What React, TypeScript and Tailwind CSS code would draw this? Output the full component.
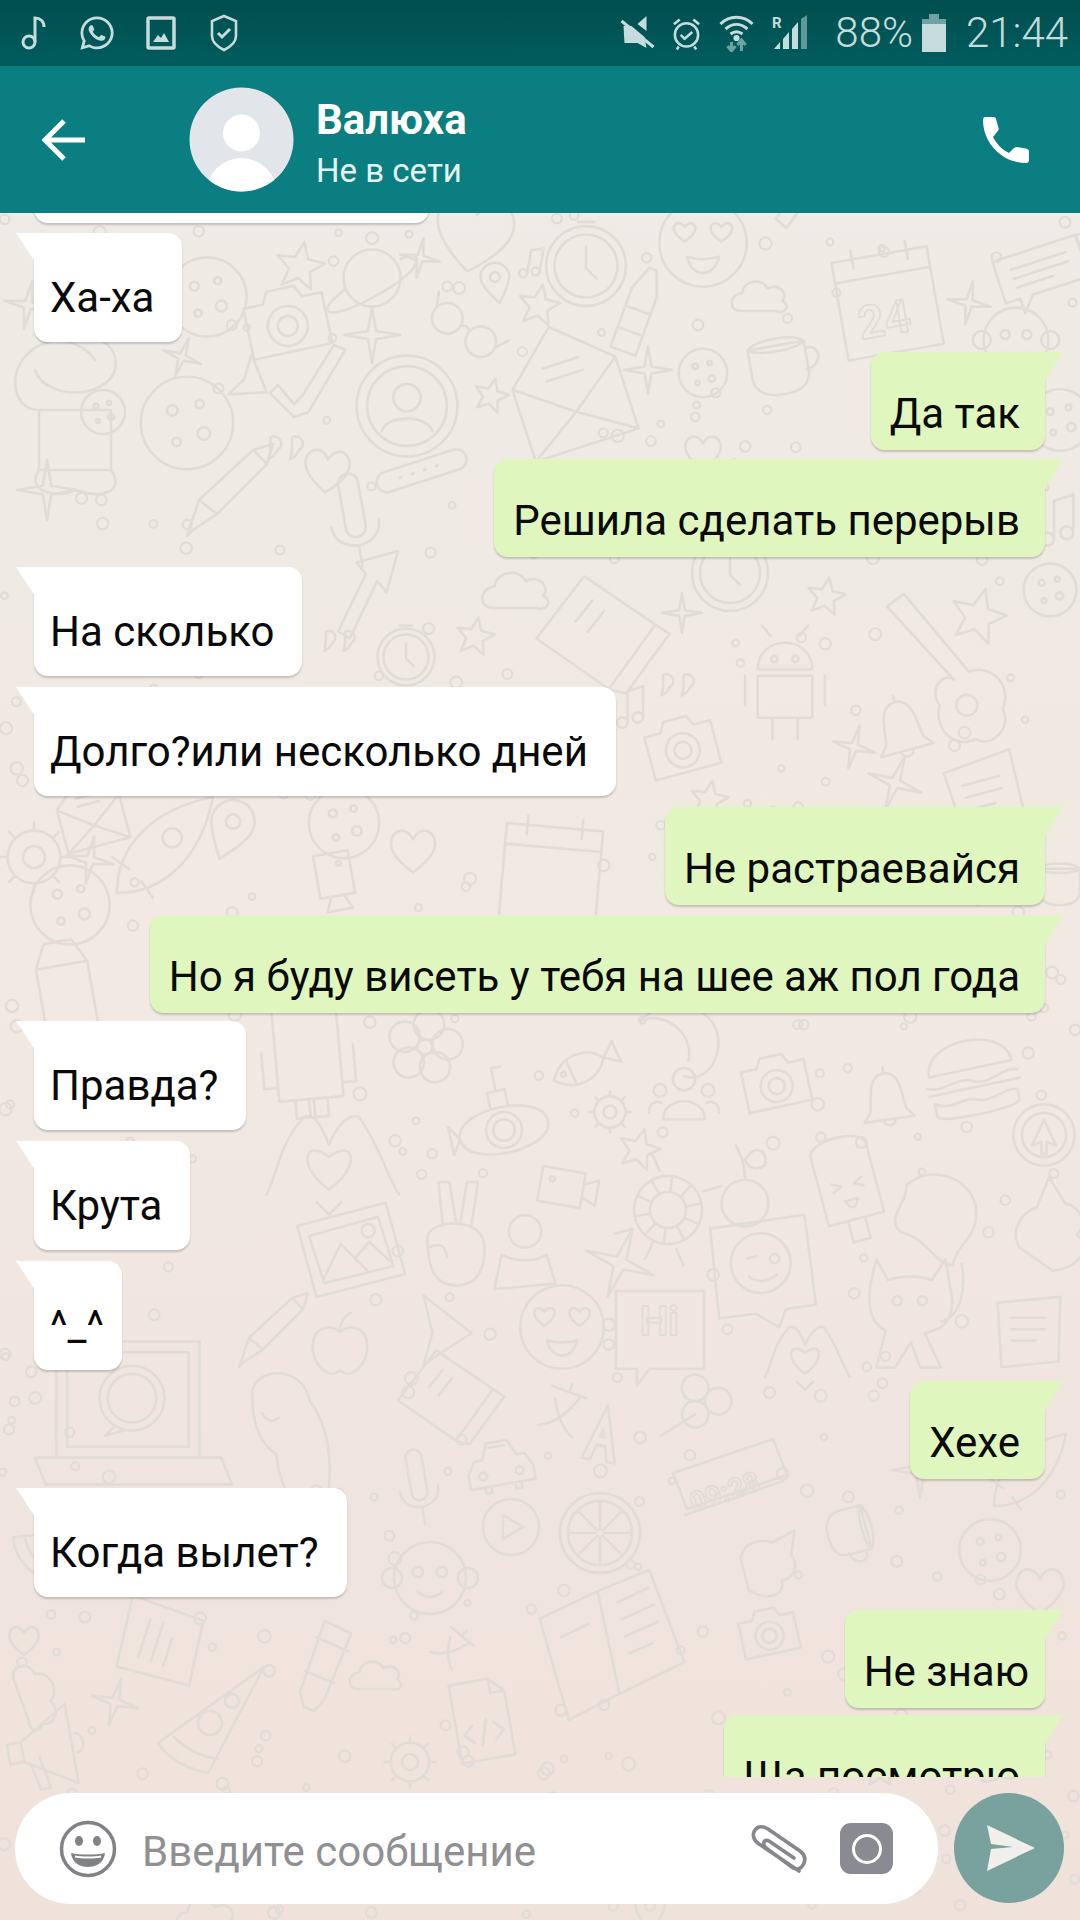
import React from 'react';
import { FaWhatsapp } from 'react-icons/fa';

const c = (x: number, y: number, r: number) =>
  `M${x - r} ${y}a${r} ${r} 0 1 0 ${2 * r} 0a${r} ${r} 0 1 0 ${-2 * r} 0`;

const star = (n: number, R: number, r: number) => {
  let d = '';
  for (let i = 0; i < n * 2; i++) {
    const rad = i % 2 ? r : R;
    const a = (Math.PI * i) / n - Math.PI / 2;
    d += `${i ? 'L' : 'M'}${(rad * Math.cos(a)).toFixed(1)} ${(rad * Math.sin(a)).toFixed(1)}`;
  }
  return d + 'Z';
};

const spokes = (n: number, r1: number, r2: number) => {
  let d = '';
  for (let i = 0; i < n; i++) {
    const a = (2 * Math.PI * i) / n;
    d += `M${(r1 * Math.cos(a)).toFixed(1)} ${(r1 * Math.sin(a)).toFixed(1)}L${(r2 * Math.cos(a)).toFixed(1)} ${(r2 * Math.sin(a)).toFixed(1)}`;
  }
  return d;
};

const SHAPES: Record<string, string> = {
  planet: c(0, 0, 30) + 'M-28 12C-50 28-50 36-42 36C-30 38 20 14 42-8C52-22 48-28 30-20',
  star5: star(5, 36, 16),
  star4: star(4, 40, 8),
  heart: 'M0 30C-30 8-34-8-26-20C-18-30-6-26 0-14C6-26 18-30 26-20C34-8 30 8 0 30Z',
  cam: 'M-40-22H-20L-14-34H14L20-22H40V30H-40Z' + c(0, 4, 20) + c(0, 4, 10),
  clock: c(0, 0, 38) + c(0, 0, 30) + 'M0-18V2L10 12M-8-42h16',
  note: 'M-10 24V-24L14-32V16' + c(-18, 24, 8) + c(6, 16, 8),
  pin: 'M0 34C-20 8-24-2-24-10A24 24 0 0 1 24-10C24-2 20 8 0 34Z' + c(0, -10, 8),
  glasses: c(-24, 0, 18) + c(24, 0, 18) + 'M-6-2Q0-8 6-2M-42-4L-50-20M42-4L50-20',
  bottle: 'M-14-20L-4-46H4L14-20V46H-14ZM-14 0H14M-14 24H14',
  envelope: 'M-40-10L0-46L40-10V46H-40ZM-40-10L0 20L40-10M-40 46L0 20L40 46M-14-18H14M-14-8H14',
  profile: c(0, 0, 48) + c(0, 0, 38) + c(0, -8, 13) + 'M-24 24C-20 8 20 8 24 24',
  emoji: c(0, 0, 38) + 'M-16-14c-6-8-14 0-6 8l6 5 6-5c8-8 0-16-6-8ZM16-14c-6-8-14 0-6 8l6 5 6-5c8-8 0-16-6-8ZM-14 12Q0 16 14 12Q10 26 0 26Q-10 26-14 12Z',
  cloud: 'M-30 20C-46 20-46-2-28-4C-26-22 0-24 6-10C22-18 34-2 26 6C38 14 28 24 18 20Z',
  calendar: 'M-42-40H42V46H-42ZM-42-22H42M-24-48V-32M24-48V-32',
  cup: 'M-34-16H26V14C26 32 10 36-4 36C-20 36-34 30-34 14ZM26-8C42-12 44 12 24 14M-34-16C-24-26 16-26 26-16C16-8-24-8-34-16Z',
  monkey: c(0, 0, 36) + c(-38, 0, 10) + c(38, 0, 10) + c(-12, -6, 5) + c(12, -6, 5) + 'M-12 14Q0 24 12 14',
  bubbleLines: 'M-46-24H46V22H-16L-30 38V22H-46ZM-30-10H30M-30 0H30M-30 10H10',
  mic: 'M-10-40a10 10 0 0 1 20 0V4a10 10 0 0 1-20 0ZM-24 0C-24 30 24 30 24 0M0 24V44',
  pill: 'M-46-12H40A12 12 0 0 1 40 12H-46A12 12 0 0 1-46-12ZM-30 0h2M-15 0h2M0 0h2M15 0h2',
  flower: c(0, -24, 16) + c(23, -7, 16) + c(14, 19, 16) + c(-14, 19, 16) + c(-23, -7, 16) + c(0, 0, 8),
  robot: 'M-28-46H28V34H-28ZM-40-10V22H-28M40-10V22H28M-14 34V50H-2V34M2 34V50H14V34',
  fish: 'M-40 0C-20-26 14-22 28 0L46-14V14L28 0C14 22-20 26-40 0ZM-16-14V14' + c(-26, -2, 3),
  group: c(0, -26, 14) + 'M-26 24C-26-6 26-6 26 24Z' + c(-30, -12, 8) + c(30, -12, 8) + 'M-44 16C-44 4-34 0-28 4M44 16C44 4 34 0 28 4',
  gear: c(0, 0, 10) + c(0, 0, 24) + spokes(8, 24, 32),
  submarine: 'M-50 0C-50-34 50-34 50 0C50 34-50 34-50 0Z' + c(0, 0, 20) + c(0, 0, 12) + 'M-10-26V-44H10V-26M0-44V-70H10M-50 0L-60-16V16Z',
  bell: 'M0-36C-22-36-20-6-24 14L-34 26H34L24 14C20-6 22-36 0-36ZM-8 26A8 8 0 0 0 8 26M0-36V-44',
  burger: 'M-40-8C-40-44 40-44 40-8ZM-44 2C-30 10-14-4 0 4C14 12 30-4 44 2M-44 10H44M-40 18C-26 28-10 16 0 22C12 28 28 16 40 20V30C40 38-40 38-40 30Z',
  hands: 'M-50 30C-40 10-40-10-20-32C-10-36-4-20 0-10C4-20 14-36 24-32C40-10 44 10 56 30M-10 36L0 46L10 36M0 0C-20-16-26 8 0 26C26 8 20-16 0 0Z',
  turtle: c(0, 0, 34) + c(0, 0, 18) + spokes(10, 18, 34) + 'M-24-32L-38-44M24-32L38-44M-24 32L-38 44M24 32L38 44M0 34V54',
  cherry: c(0, 18, 26) + 'M0-8C0-24-4-34-10-46M0-30C12-50 26-40 22-24C14-18 4-20 0-30Z',
  popsicle: 'M-26-34C-26-50 26-50 26-34V30H-26ZM-8 30V50H8V30M-14-6l8 4-8 4M14-6l-8 4 8 4M-6 12Q0 26 6 12Z',
  video: 'M-34-22H20V22H-34ZM20-8L38-16V16L20 8Z' + c(-20, -8, 3),
  blob: 'M-30-30C-10-50 30-40 36-10C40 20 18 24 14 46C0 48-10 20-36 14C-50 0-30-10-30-30Z',
  cone: 'M0-50L16-24C36-18 36 0 28 8C44 22 30 40 4 44L-30 20C-40 0-24-16-12-20Z',
  target: c(0, 0, 36) + c(0, 0, 26) + 'M0-18L14 12L3 8V22H-3V8L-14 12Z',
  photo: 'M-46-26L36-40L48 26L-34 40ZM-36-16L28-28L38 18L-26 28ZM-26 24L-8-6L14 20M4 8L18-6L36 14' + c(18, -16, 6),
  peace: 'M-12-10L-16-50H-6L0-14M4-14L10-50H20L14-10M-26 0C-24-16 26-20 26 10C26 34 16 44 0 44C-18 44-26 30-26 0ZM-26 10C-14 4-10 8-8 18',
  person: c(0, -24, 18) + 'M-34 40L-26 2C-10 10 10 10 24 2L34 34Z',
  wink: 'M-46-36L36-48L46 30L20 34L14 50L-6 38L-38 42Z' + c(-2, -6, 26) + 'M-14-10l8-2M-12 6Q0 14 12 4' + c(10, -10, 4),
  cat: 'M-30-44L-20-26C-8-30 8-30 18-26L30-44L36-8C36 14 22 18 12 20L26 50H8L0 28L-14 50H-30L-22 18C-38 10-40-10-30-44ZM26 10C44 6 48-20 44-40' + c(-12, -8, 4) + c(10, -8, 4),
  noteCard: 'M-32-32L34-38L32 30L-28 36ZM-18-16H18M-18-4H18M-18 8H8',
  pencil: 'M-40 40L-46 46L-34 10L20-40L34-26L-16 24ZM20-40L40-46L34-26M-34 10L-16 24',
  apple: 'M0-14C-14-26-36-18-34 8C-32 30-12 46 0 34C12 46 32 30 34 8C36-18 14-26 0-14ZM0-14C0-26 6-34 14-38',
  plane: 'M-30-46L34 4L-30 46L-18 4Z',
  hi: 'M-42-40H42V34H-10L-22 50V34H-42Z',
  laptop: 'M-56-50H50V36H-56ZM-48-42H42V28H-48ZM-72 36H66L74 56H-64ZM-14 14L-20 20L-6 16' + c(0, -8, 24) + c(0, -8, 18),
  dino: 'M-34-30C-34-52 8-56 14-24C30-4 34 30 28 60C10 70-10 60-14 20C-30 10-34-10-34-30ZM-26-14Q-20-4-12-10',
  book: 'M-44-24L14-48L44 14L-14 40ZM-14 40L-4 50L50 26L44 14M-10-20l20-8M-6-8l20-8',
  car: 'M-40 8L-30-8H-20L-12-28H14L24-8H34L42 8V26H-40ZM-22 26v8h8v-8M16 26v8h8v-8M-10-22H10' + c(-22, 12, 5) + c(24, 12, 5),
  clover: c(-14, -14, 14) + c(14, -14, 14) + c(0, 10, 14) + 'M0 10L-20 48',
  digital: 'M-56-16L44-50L58-14L-42 20ZM-44 26L54-8',
  orange: c(0, 0, 40) + c(0, 0, 32) + spokes(8, 4, 32),
  play: c(0, 0, 28) + 'M-8-12V12L12 0Z',
  openbook: 'M-50-28L0-40V44L-44 56ZM0-40L44-48L56 30L0 44ZM14-28L40-34M14-14L42-20M14 0L42-6M14 14L34 10M-36-10L-12-16',
  pizza: 'M-60 30L46-46L-10 60C-30 56-50 46-60 30ZM-44 24C-30 38-14 44 0 46' + c(-8, 10, 12) + c(14, -12, 7),
  code: 'M-30-44H14L30-28V44H-30ZM14-44V-28H30M-12 4L-22 14L-12 24M12 4L22 14L12 24M4 0L-4 28',
  megaphone: 'M-30-10L20-40V40L-30 10ZM-30-10H-44V10H-30ZM-24 12L-18 40H-8L-14 8M24-10C34-8 34 8 24 10',
  android: 'M-26-10C-26-44 26-44 26-10ZM-26-4H26V36H-26ZM-38-4V24M38-4V24M-12 36V56M12 36V56M-14-42L-22-52M14-42L22-52' + c(-10, -20, 3) + c(10, -20, 3),
  guitar: 'M-60-70L-44-82L18-8C40-16 60 6 50 28C60 44 40 66 24 56C8 66-16 50-10 24C-22 6-4-8 4 0Z' + c(16, 24, 10),
  arrow: 'M-16-30L20-40L10-4L2-14L-22 36L-32 30L-8-20Z',
  quotes: 'M-14-14a8 8 0 1 1 8 14q-4 8-10 10q2-6 2-12zM10-14a8 8 0 1 1 8 14q-4 8-10 10q2-6 2-12z',
  tube: 'M-16-50L16-44L6 36L-2 50L-14 48L-22 34ZM-20-30L18-24M-22 10L12 14',
  astro: 'M-60-20A44 44 0 0 1 20-40M-40-30C-30 0 30 0 40-30C44-50 30-60 20-60M-36 10H36V70H-36ZM-36 70C-50 90-20 100 0 90C30 100 50 90 36 70M-60-20C-60 0-50 10-36 10',
  cookie: c(0, 0, 44) + c(-14, -12, 5) + c(12, -18, 4) + c(16, 10, 6) + c(-10, 18, 4),
  rocket: 'M-40 40C-40 0-10-30 40-40C30 10 0 40-40 40ZM-30 20L-44 10M-20 30L-10 44' + c(6, -6, 8),
  shrimp: 'M-40-20C-10-50 40-30 30 10C24 30 10 34 0 30M-40-20C-20-30 10-10 4 16',
  xlate: 'M-20-20H20M0-30V-20M14-20C6 6-6 20-20 26M-12-8C-4 8 6 20 20 26',
  letterA: 'M-24 40L0-40L24 40H12L6 18H-6L-12 40ZM-3 6L0-6L3 6Z',
  ticks: 'M-40 10L-20 34L-10 24L30-40L44-34L-2 44L-20 50L-50 20Z',
  carton: 'M-26-20L-14-44H14L26-20V46H-26ZM-26-20H26',
};

// [shape, x, y, scale, rotation]
const DOODLES: [string, number, number, number, number][] = [
  ['astro', 75, 400, 1, 0], ['cookie', 103, 412, 0.5, 0], ['cookie', 187, 423, 1.05, 0], ['cookie', 207, 297, 0.9, 0],
  ['cam', 287, 322, 1, -12], ['star5', 300, 267, 0.7, 10], ['planet', 372, 278, 0.95, 0], ['star4', 372, 335, 0.7, 0],
  ['ticks', 310, 377, 0.8, 0], ['plane', 253, 382, 0.5, 30], ['star4', 182, 357, 0.5, 20], ['pencil', 233, 490, 1, 0],
  ['quotes', 283, 450, 0.9, 0], ['heart', 327, 470, 0.75, 5], ['star4', 47, 490, 0.75, 0], ['star4', 28, 305, 0.6, 10],
  ['heart', 474, 233, 1.3, 10], ['star4', 420, 258, 0.5, 10], ['clock', 586, 266, 1.05, 0], ['note', 534, 263, 0.5, 10],
  ['pin', 496, 283, 0.6, -10], ['star5', 539, 306, 0.6, 10], ['glasses', 464, 330, 0.85, 35], ['bottle', 638, 310, 0.95, 20],
  ['envelope', 568, 386, 1.35, -18], ['profile', 407, 406, 1.05, 0], ['emoji', 703, 243, 1.15, 0], ['cloud', 763, 296, 0.75, 0],
  ['calendar', 887, 300, 1.15, -10], ['cup', 782, 360, 0.95, -10], ['heart', 703, 452, 0.6, 0], ['cookie', 703, 373, 0.55, 0],
  ['star4', 648, 370, 0.6, 0], ['mic', 355, 523, 1, -10], ['pill', 424, 470, 0.85, -18], ['star5', 491, 396, 0.5, 15],
  ['bubbleLines', 1041, 270, 0.95, -18], ['star4', 969, 303, 0.55, 10], ['monkey', 1016, 340, 0.9, 0], ['arrow', 820, 190, 1.2, 10],
  ['cookie', 1060, 420, 0.7, 0], ['note', 1062, 520, 0.8, 0],
  ['clock', 406, 657, 0.75, 0], ['star5', 475, 637, 0.55, 10], ['book', 599, 637, 1.25, -30], ['android', 785, 680, 1.05, 0],
  ['guitar', 950, 680, 1.05, 0], ['bell', 902, 730, 0.8, -15], ['cam', 682, 747, 0.85, -15], ['star4', 854, 747, 0.55, 15],
  ['star4', 682, 613, 0.5, 0], ['clock', 730, 573, 1, 0], ['star5', 826, 597, 0.55, 10], ['star5', 978, 617, 0.8, 15],
  ['quotes', 675, 687, 0.85, 0], ['arrow', 375, 597, 1.15, 0], ['quotes', 337, 643, 0.8, 0], ['note', 634, 707, 0.65, 0],
  ['cloud', 520, 590, 0.9, 0], ['cookie', 1050, 590, 0.6, 0], ['envelope', 90, 810, 0.8, -15], ['gear', 34, 857, 1.1, 0],
  ['star4', 90, 860, 0.6, 10], ['rocket', 165, 845, 1.2, 0], ['cookie', 344, 823, 0.8, 0], ['heart', 413, 850, 0.75, 0],
  ['pin', 230, 830, 0.9, 20], ['video', 335, 880, 0.8, 80], ['calendar', 551, 873, 1.15, 5], ['star5', 709, 800, 0.55, 10],
  ['star4', 895, 783, 0.7, 20], ['noteCard', 985, 797, 1.05, -15], ['cup', 1062, 880, 0.7, 0], ['cookie', 70, 905, 0.9, 0],
  ['carton', 65, 985, 1, -10], ['flower', 425, 1047, 0.95, 10], ['robot', 308, 1060, 1.15, -5], ['fish', 583, 1067, 0.8, -25],
  ['shrimp', 684, 1043, 1.1, 0], ['cam', 776, 1083, 0.8, -12], ['group', 684, 1100, 0.8, 0], ['gear', 610, 1112, 0.65, 0],
  ['submarine', 504, 1130, 0.9, -12], ['bell', 887, 1100, 0.75, -8], ['burger', 972, 1077, 1.05, -12], ['hands', 329, 1157, 1.25, 0],
  ['star5', 639, 1150, 0.6, 15], ['turtle', 668, 1210, 1, 25], ['cherry', 745, 1187, 0.9, 0], ['popsicle', 848, 1187, 1.1, -15],
  ['video', 567, 1188, 0.8, 10], ['blob', 938, 1217, 1.05, 0], ['cone', 1049, 1227, 1, 0], ['target', 1044, 1135, 0.85, 0],
  ['photo', 350, 1250, 1.1, -5], ['peace', 456, 1237, 1.1, 0], ['person', 525, 1253, 0.9, 0], ['wink', 763, 1270, 1.15, 0],
  ['star4', 620, 1263, 0.9, 20], ['cat', 911, 1310, 1.15, 0], ['noteCard', 1028, 1333, 0.95, 0], ['pencil', 276, 1330, 0.8, 0],
  ['apple', 340, 1343, 0.8, 0], ['plane', 446, 1330, 0.75, 0], ['emoji', 562, 1327, 1.1, 0], ['hi', 660, 1333, 1.05, 0],
  ['hands', 805, 1353, 0.8, 0], ['laptop', 132, 1409, 1.35, 0], ['dino', 293, 1430, 1.2, 0], ['book', 448, 1399, 1, -30],
  ['car', 499, 1464, 0.8, -10], ['letterA', 603, 1433, 0.7, 10], ['xlate', 563, 1409, 0.9, 20], ['clover', 700, 1406, 0.95, 30],
  ['digital', 729, 1489, 1, 0], ['orange', 600, 1533, 1, 0], ['play', 511, 1527, 1, 0], ['monkey', 430, 1578, 1, 0],
  ['mic', 419, 1489, 0.8, -10], ['cup', 855, 1533, 0.75, 75], ['cone', 769, 1561, 0.8, 40], ['openbook', 608, 1640, 1.25, -12],
  ['cam', 769, 1633, 0.7, -12], ['noteCard', 161, 1644, 1.1, -72], ['pizza', 218, 1713, 1, 0], ['tube', 327, 1668, 0.9, 15],
  ['xlate', 453, 1647, 0.7, 40], ['cloud', 379, 1675, 0.7, 0], ['code', 482, 1720, 0.9, -10], ['cloud', 40, 1699, 0.9, 70],
  ['megaphone', 52, 1747, 1, -10], ['star4', 115, 1702, 0.6, 15], ['gear', 410, 1762, 0.8, 0], ['heart', 24, 1640, 0.5, 0],
  ['pizza', 60, 1540, 0.7, 30], ['cloud', 950, 1650, 0.8, 0], ['star4', 920, 1470, 0.7, 0], ['rocket', 1030, 1470, 0.9, 0],
  ['heart', 1040, 1590, 0.8, 0], ['cookie', 990, 1550, 0.7, 0], ['planet', 1010, 1760, 0.6, 0], ['star5', 880, 1770, 0.5, 0],
  ['cloud', 210, 1915, 0.8, 0], ['pin', 650, 1912, 0.6, 0],
];

const dots = (() => {
  const out: [number, number, number][] = [];
  let seed = 4217;
  const rnd = () => {
    seed = (seed * 1103515245 + 12345) & 0x7fffffff;
    return seed / 0x7fffffff;
  };
  for (let i = 0; i < 1500 && out.length < 400; i++) {
    const x = rnd() * 1080;
    const y = 215 + rnd() * 1700;
    const clear = DOODLES.every(([, dx, dy, s]) => Math.hypot(dx - x, dy - y) > 40 * s);
    if (clear) out.push([x, y, 3 + rnd() * 3.5]);
  }
  return out;
})();

const Wallpaper = () => (
  <svg
    className="absolute inset-0 h-[1920px] w-[1080px] blur-[0.5px]"
    viewBox="0 0 1080 1920"
    fill="none"
    stroke="#e1dcd6"
    strokeLinejoin="round"
    strokeLinecap="round"
  >
    {DOODLES.map(([k, x, y, s, r], i) => (
      <path
        key={i}
        d={SHAPES[k]}
        strokeWidth={2.6 / s}
        transform={`translate(${x} ${y}) rotate(${r}) scale(${s})`}
      />
    ))}
    {dots.map(([x, y, r], i) => (
      <circle key={i} cx={x} cy={y} r={r} strokeWidth={2.2} />
    ))}
    <g strokeWidth={1.8} fontFamily="Roboto" fontWeight={700}>
      <text x="858" y="335" fontSize="46" transform="rotate(-10 887 320)">24</text>
      <text x="640" y="1335" fontSize="40">Hi</text>
      <text x="688" y="1500" fontSize="28" transform="rotate(-19 729 1489)">09:28</text>
    </g>
  </svg>
);

type Msg = { text: string; me: boolean; gap: string; width?: string; pad?: string };

const MESSAGES: Msg[] = [
  { text: ' ', me: false, gap: '-mt-[99px]', width: 'w-[395px]' },
  { text: 'Ха-ха', me: false, gap: 'mt-[10px]' },
  { text: 'Да так', me: true, gap: 'mt-[10px]' },
  { text: 'Решила сделать перерыв', me: true, gap: 'mt-[9px]' },
  { text: 'На сколько', me: false, gap: 'mt-[10px]' },
  { text: 'Долго?или несколько дней', me: false, gap: 'mt-[11px]' },
  { text: 'Не растраевайся', me: true, gap: 'mt-[11px]' },
  { text: 'Но я буду висеть у тебя на шее аж пол года', me: true, gap: 'mt-[10px]' },
  { text: 'Правда?', me: false, gap: 'mt-[8px]' },
  { text: 'Крута', me: false, gap: 'mt-[11px]' },
  { text: '^_^', me: false, gap: 'mt-[11px]', pad: 'pr-[18px]' },
  { text: 'Хехе', me: true, gap: 'mt-[11px]' },
  { text: 'Когда вылет?', me: false, gap: 'mt-[9px]' },
  { text: 'Не знаю', me: true, gap: 'mt-[13px]', pad: 'pr-[16px]' },
  { text: 'Ща посмотрю', me: true, gap: 'mt-[7px]' },
];

const Bubble = ({ msg }: { msg: Msg }) =>
  msg.me ? (
    <div className={`relative mr-[35px] self-end rounded-[14px] rounded-tr-none bg-[#e0f6bf] pb-[12px] pl-[19px] pt-[38px] shadow-[0_2px_2px_rgba(0,0,0,0.18)] ${msg.pad ?? 'pr-[25px]'} ${msg.gap}`}>
      <div className="absolute -right-[18px] top-0 h-[31px] w-[19px] bg-[#e0f6bf] [clip-path:polygon(0_0,100%_0,0_100%)]" />
      <span className="block whitespace-nowrap text-[42px] leading-[48px] text-[#0a0a0a]">{msg.text}</span>
    </div>
  ) : (
    <div className={`relative ml-[34px] self-start rounded-[14px] rounded-tl-none bg-white pb-[20px] pl-[16px] pt-[41px] shadow-[0_2px_2px_rgba(0,0,0,0.18)] ${msg.pad ?? 'pr-[28px]'} ${msg.gap} ${msg.width ?? ''}`}>
      <div className="absolute -left-[18px] top-0 h-[29px] w-[19px] bg-white [clip-path:polygon(0_0,100%_0,100%_100%)]" />
      <span className="block whitespace-pre text-[42px] leading-[48px] text-[#0a0a0a]">{msg.text}</span>
    </div>
  );

const StatusIcons = {
  Left: () => (
    <div className="flex items-center text-[#c6dcdc]">
      <svg className="ml-[21px] h-[36px] w-[26px]" viewBox="0 0 26 36" fill="none" stroke="currentColor" strokeWidth="3">
        <circle cx="8" cy="27" r="6" />
        <path d="M14 27V3c5 0 9 3 9 9" />
      </svg>
      <FaWhatsapp className="ml-[31px] h-[38px] w-[38px]" />
      <svg className="ml-[30px] h-[34px] w-[30px]" viewBox="0 0 30 34" fill="none" stroke="currentColor">
        <rect x="2" y="2" width="26" height="30" rx="1" strokeWidth="3.5" />
        <path d="M7 26l5-7 3 3 3-5 5 9z" fill="currentColor" stroke="none" />
      </svg>
      <svg className="ml-[34px] h-[38px] w-[28px]" viewBox="0 0 28 38" fill="none" stroke="currentColor" strokeWidth="2.6">
        <path d="M14 2l12 5v15c0 6-6 11-12 14C8 33 2 28 2 22V7z" />
        <path d="M8 19l4 4 8-8" strokeWidth="3" />
      </svg>
    </div>
  ),
  Right: () => (
    <div className="flex items-center text-[#c6dcdc]">
      <svg className="h-[36px] w-[35px]" viewBox="0 0 34 36" fill="currentColor">
        <path d="M26 1v15L17 9zM3 11h8l13 11 2 11-9-5H4z" />
        <path d="M1 6l32 26" stroke="currentColor" strokeWidth="3" />
      </svg>
      <svg className="ml-[16px] h-[36px] w-[31px]" viewBox="0 0 32 36" fill="none" stroke="currentColor" strokeWidth="2.6">
        <circle cx="16" cy="20" r="12" />
        <path d="M10 20l4 4 8-7M3 9l6-5M29 9l-6-5M8 32l-2 3M24 32l2 3" />
      </svg>
      <svg className="ml-[16px] h-[38px] w-[37px]" viewBox="0 0 36 38" fill="none" stroke="currentColor" strokeWidth="3">
        <path d="M2 10C11 1 25 1 34 10M7 15c7-6 15-6 22 0M12 20c4-3 8-3 12 0" />
        <circle cx="18" cy="24" r="1.6" fill="currentColor" />
        <path d="M13 28v9M9 32l4 5 4-5M23 37v-11M19 31l4-5 4 5" stroke="#6fa3a3" />
      </svg>
      <svg className="ml-[17px] h-[36px] w-[36px]" viewBox="0 0 36 36" fill="currentColor">
        <text x="0" y="13" fontSize="15" fontWeight="700" fontFamily="Roboto">R</text>
        <path d="M2 34l6-7v7zM11 34V24l6-7v17zM20 34V14l6-7v27z" />
        <path d="M29 34V4l6-4v34z" fill="#5e9a9a" />
      </svg>
      <span className="ml-[27px] text-[42px] font-light leading-none">88%</span>
      <svg className="ml-[9px] h-[38px] w-[24px]" viewBox="0 0 24 38" fill="currentColor">
        <path d="M0 5h7V0h10v5h7v33H0z" />
        <path d="M0 5h7V0h10v5h7v5H0z" fill="#6fa3a3" />
      </svg>
      <span className="ml-[20px] mr-[12px] text-[42px] font-light leading-none">21:44</span>
    </div>
  ),
};

const Avatar = () => (
  <svg className="ml-[103px] h-[105px] w-[105px] shrink-0" viewBox="0 0 105 105">
    <defs>
      <clipPath id="avatar-clip">
        <circle cx="52.5" cy="52.5" r="52" />
      </clipPath>
    </defs>
    <circle cx="52.5" cy="52.5" r="52" fill="#e2e6eb" />
    <g clipPath="url(#avatar-clip)" fill="#fff">
      <circle cx="52.5" cy="46" r="18.5" />
      <ellipse cx="52.5" cy="106" rx="35" ry="35" />
    </g>
  </svg>
);

export default function App() {
  return (
    <div className="relative h-[1920px] w-[1080px] overflow-hidden bg-gradient-to-b from-[#eeebe6] via-[#f1e9e2] to-[#efe2db] font-['Roboto',sans-serif]">
      <Wallpaper />
      <div className="relative flex h-full flex-col">
        <div className="flex h-[66px] shrink-0 items-center justify-between bg-gradient-to-b from-[#014e4e] to-[#015c5e]">
          <StatusIcons.Left />
          <StatusIcons.Right />
        </div>

        <div className="z-10 flex h-[147px] shrink-0 items-center bg-[#0a7e80]">
          <svg className="ml-[42px] h-[44px] w-[44px]" viewBox="0 0 44 44" fill="none" stroke="#fff" strokeWidth="5">
            <path d="M43 22H5M22 3L3 22l19 19" />
          </svg>
          <Avatar />
          <div className="ml-[22px] mt-[9px] flex flex-1 flex-col text-white">
            <span className="text-[42px] font-bold leading-[44px]">Валюха</span>
            <span className="mt-[10px] text-[33px] leading-[38px] text-[#e4f3f2]">Не в сети</span>
          </div>
          <svg className="mr-[50px] h-[48px] w-[48px]" viewBox="0 0 48 48" fill="#fff">
            <path d="M3 1C2 1 1 2 1 4C1 27 20 47 44 47C46 47 47 46 47 44L47 36C47 34 46 33 44 32.5L35 31C33 31 32 32 31 33L27 37C19 33 15 28 11 21L15 16C16 15 17 14 16.5 12L14 3C14 2 13 1 11 1Z" />
          </svg>
        </div>

        <div className="flex h-[1564px] shrink-0 flex-col overflow-hidden">
          {MESSAGES.map((m, i) => (
            <Bubble key={i} msg={m} />
          ))}
        </div>

        <div className="flex items-start pl-[15px] pt-[16px]">
          <div className="flex h-[111px] w-[923px] items-center rounded-[56px] bg-white">
            <svg className="ml-[44px] h-[58px] w-[58px] shrink-0" viewBox="0 0 58 58" fill="none">
              <circle cx="29" cy="29" r="26.5" stroke="#808286" strokeWidth="3.5" />
              <ellipse cx="20" cy="21" rx="4" ry="5" fill="#808286" />
              <ellipse cx="38" cy="21" rx="4" ry="5" fill="#808286" />
              <path d="M12 33c9 2 25 2 34 0-1 9-8 14-17 14s-16-5-17-14z" fill="#808286" />
              <path d="M16 35.5c8 1.4 18 1.4 26 0v2c-8 1.4-18 1.4-26 0z" fill="#fff" />
            </svg>
            <span className="ml-[25px] mt-[6px] text-[42px] leading-none text-[#909093]">Введите сообщение</span>
            <svg className="ml-auto h-[50px] w-[58px]" viewBox="0 0 58 50" fill="none" stroke="#85878c" strokeWidth="3.6" strokeLinecap="round">
              <path d="M49 47L9 20C3 16 2 10 5 6c3-4 8-4 13-1l32 22c5 4 6 9 3 14-2 4-6 5-10 3L16 24c-2-2-3-4-2-6 1-2 3-2 5-1l25 17" />
            </svg>
            <div className="ml-[32px] mr-[45px] flex h-[51px] w-[53px] items-center justify-center rounded-[11px] bg-[#8a8b92]">
              <div className="h-[30px] w-[30px] rounded-full border-[3px] border-white" />
            </div>
          </div>
          <div className="ml-[16px] flex h-[110px] w-[110px] items-center justify-center rounded-full bg-[#79a19d]">
            <svg className="ml-[4px] h-[48px] w-[50px]" viewBox="0 0 50 48" fill="#f0efec">
              <path d="M1 1l48 23L1 47l4-22 22-2-22-3z" />
            </svg>
          </div>
        </div>
      </div>
    </div>
  );
}
